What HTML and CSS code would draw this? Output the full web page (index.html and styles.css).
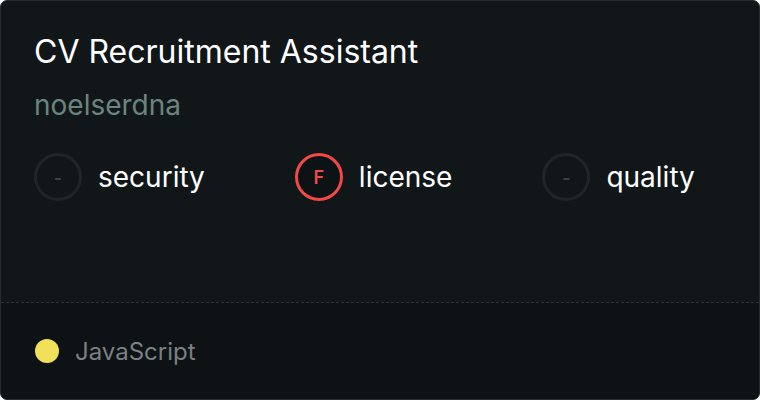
FILE: index.html
```html
<!DOCTYPE html>
<html>
<head>
<meta charset="utf-8">
<link rel="stylesheet" href="styles.css">
</head>
<body>
<div class="card">
  <div class="main">
    <div class="title">CV Recruitment Assistant</div>
    <div class="owner">noelserdna</div>
    <div class="scores">
      <div class="score"><span class="badge empty">-</span><span class="label">security</span></div>
      <div class="score"><span class="badge fail">F</span><span class="label">license</span></div>
      <div class="score"><span class="badge empty">-</span><span class="label">quality</span></div>
    </div>
  </div>
  <div class="footer">
    <span class="dot"></span><span class="lang">JavaScript</span>
  </div>
</div>
</body>
</html>
```
FILE: styles.css
```css
html, body { margin: 0; padding: 0; background: #ffffff; }
body { width: 760px; height: 400px; font-family: Inter, "Noto Sans", sans-serif; }
.card {
  box-sizing: border-box;
  width: 760px; height: 400px;
  border: 1px solid #262c30;
  border-radius: 7px;
  background: #111719;
  overflow: hidden;
  display: flex; flex-direction: column;
}
.main { flex: 1; padding: 31px 33px 0 33px; border-bottom: 1px dashed #2b3237; }
.title { color: #ffffff; font-size: 32px; line-height: 40px; }
.owner { color: #6a847f; font-size: 28px; line-height: 36px; margin-top: 15px; }
.scores { display: flex; gap: 90px; margin-top: 30px; align-items: center; }
.score { display: flex; align-items: center; gap: 16px; }
.badge {
  box-sizing: border-box;
  width: 48px; height: 48px; border-radius: 50%;
  display: flex; align-items: center; justify-content: center;
  font-size: 18px; font-weight: 600;
}
.badge.empty { border: 3px solid #1f2528; color: #3b4246; }
.badge.fail { border: 3px solid #f24848; color: #f24848; background: #0d1214; }
.label { color: #ffffff; font-size: 28px; line-height: 36px; }
.footer {
  height: 96px; background: #0d1214;
  display: flex; align-items: center; padding-left: 34px; gap: 16px;
}
.dot { width: 24px; height: 24px; border-radius: 50%; background: #f1e05a; }
.lang { color: #7b8083; font-size: 24px; }
```
